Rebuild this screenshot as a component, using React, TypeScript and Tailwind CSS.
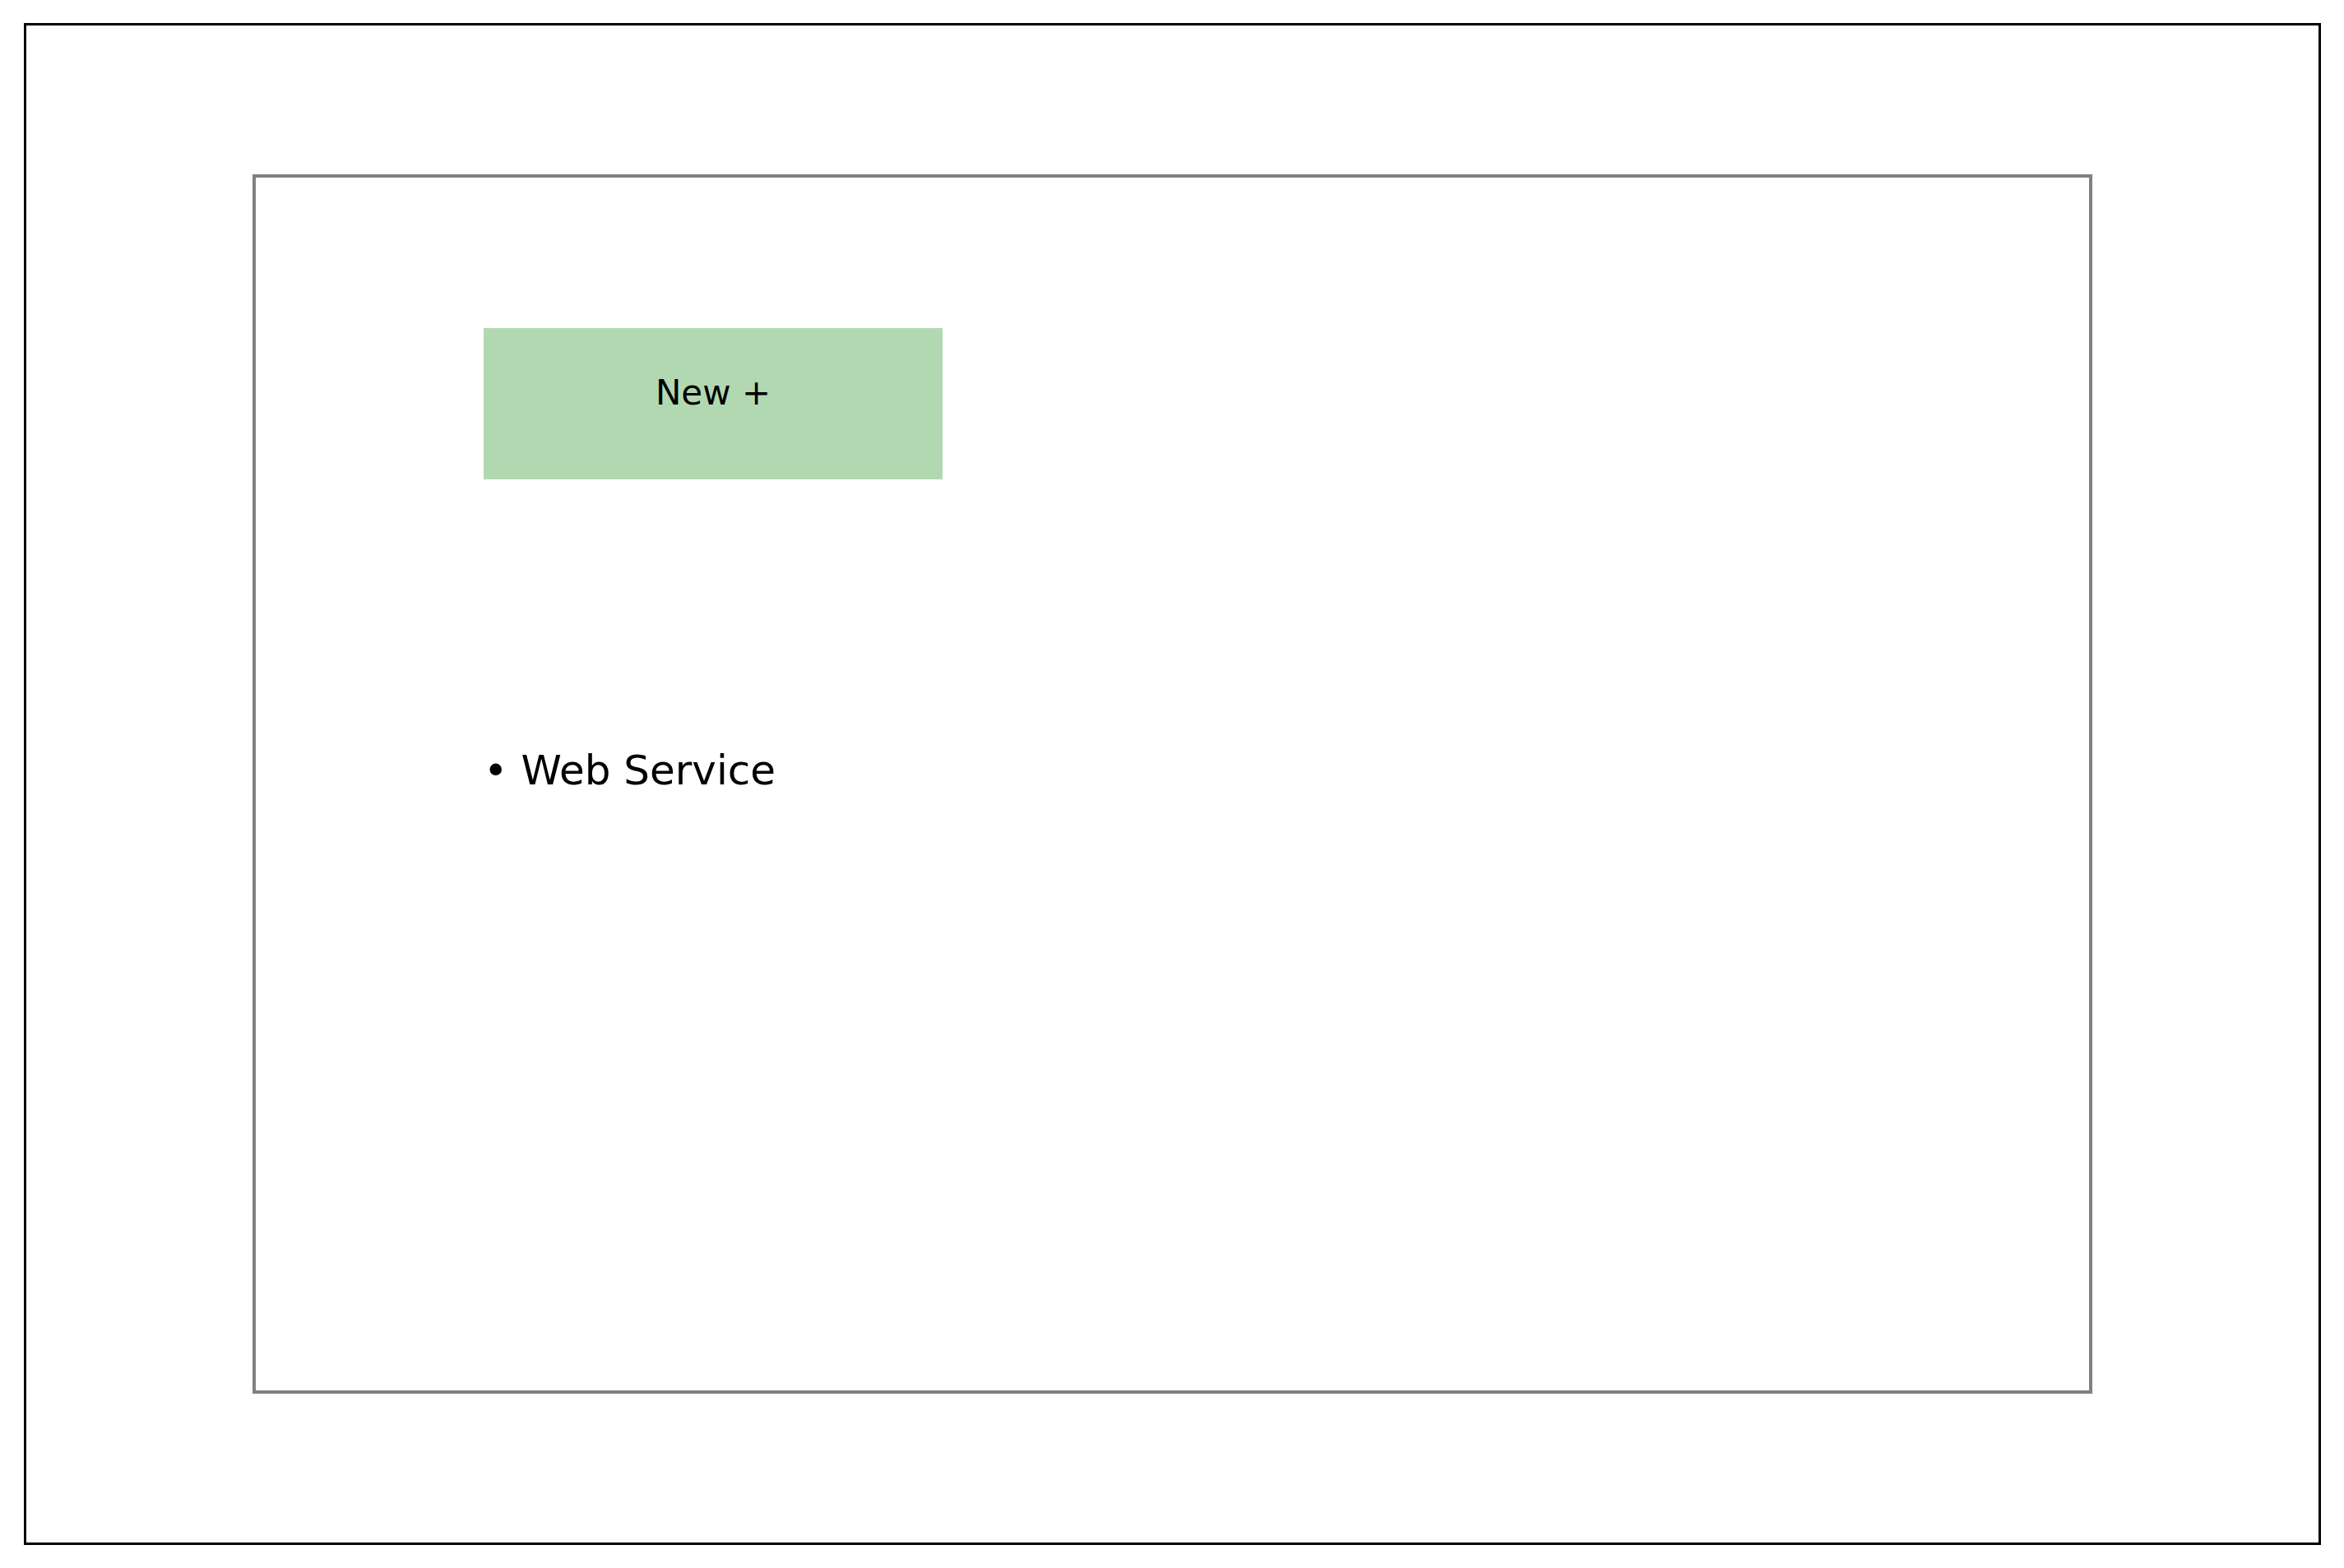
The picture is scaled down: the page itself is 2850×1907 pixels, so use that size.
const services = ['Web Service'];

export default function App() {
  return (
    <div className="flex min-h-screen bg-white pt-7 pr-7 pb-7 pl-[29px] font-['DejaVu_Sans',sans-serif] text-black">
      <div className="flex flex-1 border-3 border-black px-[275px] py-[181px]">
        <main className="flex-1 border-4 border-[#808080] px-[277px] py-[183px]">
          <button
            type="button"
            className="flex h-[184px] w-[558px] max-w-full items-center justify-center bg-[#b2d8b2] pb-[27px] text-[42px] leading-[48px]"
          >
            New +
          </button>
          <ul className="mt-[324px] text-[50px] leading-[60px]">
            {services.map((service) => (
              <li key={service}>• {service}</li>
            ))}
          </ul>
        </main>
      </div>
    </div>
  );
}
